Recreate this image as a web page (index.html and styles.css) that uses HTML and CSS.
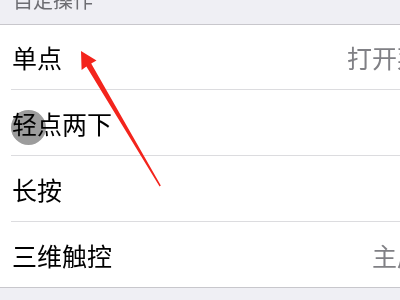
FILE: index.html
```html
<!DOCTYPE html>
<html lang="zh">
<head>
<meta charset="utf-8">
<link rel="stylesheet" href="styles.css">
</head>
<body>
<div class="screen">
  <div class="section-header"><span class="section-title">自定操作</span></div>
  <ul class="list">
    <li class="row first"><span class="label">单点</span><span class="value">打开菜单</span></li>
    <li class="row"><span class="label">轻点两下</span><span class="value"></span></li>
    <li class="row"><span class="label">长按</span><span class="value"></span></li>
    <li class="row last"><span class="label">三维触控</span><span class="value">主屏幕</span></li>
  </ul>
  <div class="touch-dot"></div>
  <svg class="arrow" width="400" height="300" viewBox="0 0 400 300">
    <polygon points="81,51 96.5,60.5 91.2,63.4 160.8,185.6 159.6,186.4 86.4,66.4 81.6,70" fill="#f3241c"/>
  </svg>
</div>
</body>
</html>
```
FILE: styles.css
```css
html, body {
  margin: 0;
  padding: 0;
  background: #efeff4;
  overflow: hidden;
}
.screen {
  width: 400px;
  height: 300px;
  overflow: hidden;
  position: relative;
  font-family: "Noto Sans CJK SC", sans-serif;
}
.section-header {
  height: 24px;
  border-bottom: 1px solid #c8c7cc;
  background: #efeff4;
  padding-left: 13px;
  overflow: hidden;
}
.section-title {
  display: block;
  font-size: 20px;
  line-height: 20px;
  color: #6d6d72;
  margin-top: -10px;
}
.list {
  list-style: none;
  margin: 0;
  padding: 0 0 0 11px;
  width: 436px;
  background: #fff;
  border-bottom: 1px solid #c8c7cc;
}
.row {
  display: flex;
  align-items: center;
  justify-content: space-between;
  height: 65px;
  border-bottom: 1px solid #dcdcdf;
}
.row.first {
  height: 64px;
}
.row.last {
  border-bottom: none;
}
.label {
  font-size: 25px;
  color: #000;
  padding-left: 1px;
  white-space: nowrap;
}
.value {
  font-size: 25px;
  color: #808085;
  white-space: nowrap;
}
.touch-dot {
  position: absolute;
  left: 11px;
  top: 110px;
  width: 35px;
  height: 35px;
  border-radius: 50%;
  background: #9c9c9c;
  mix-blend-mode: multiply;
}
.arrow {
  position: absolute;
  left: 0;
  top: 0;
}
```
